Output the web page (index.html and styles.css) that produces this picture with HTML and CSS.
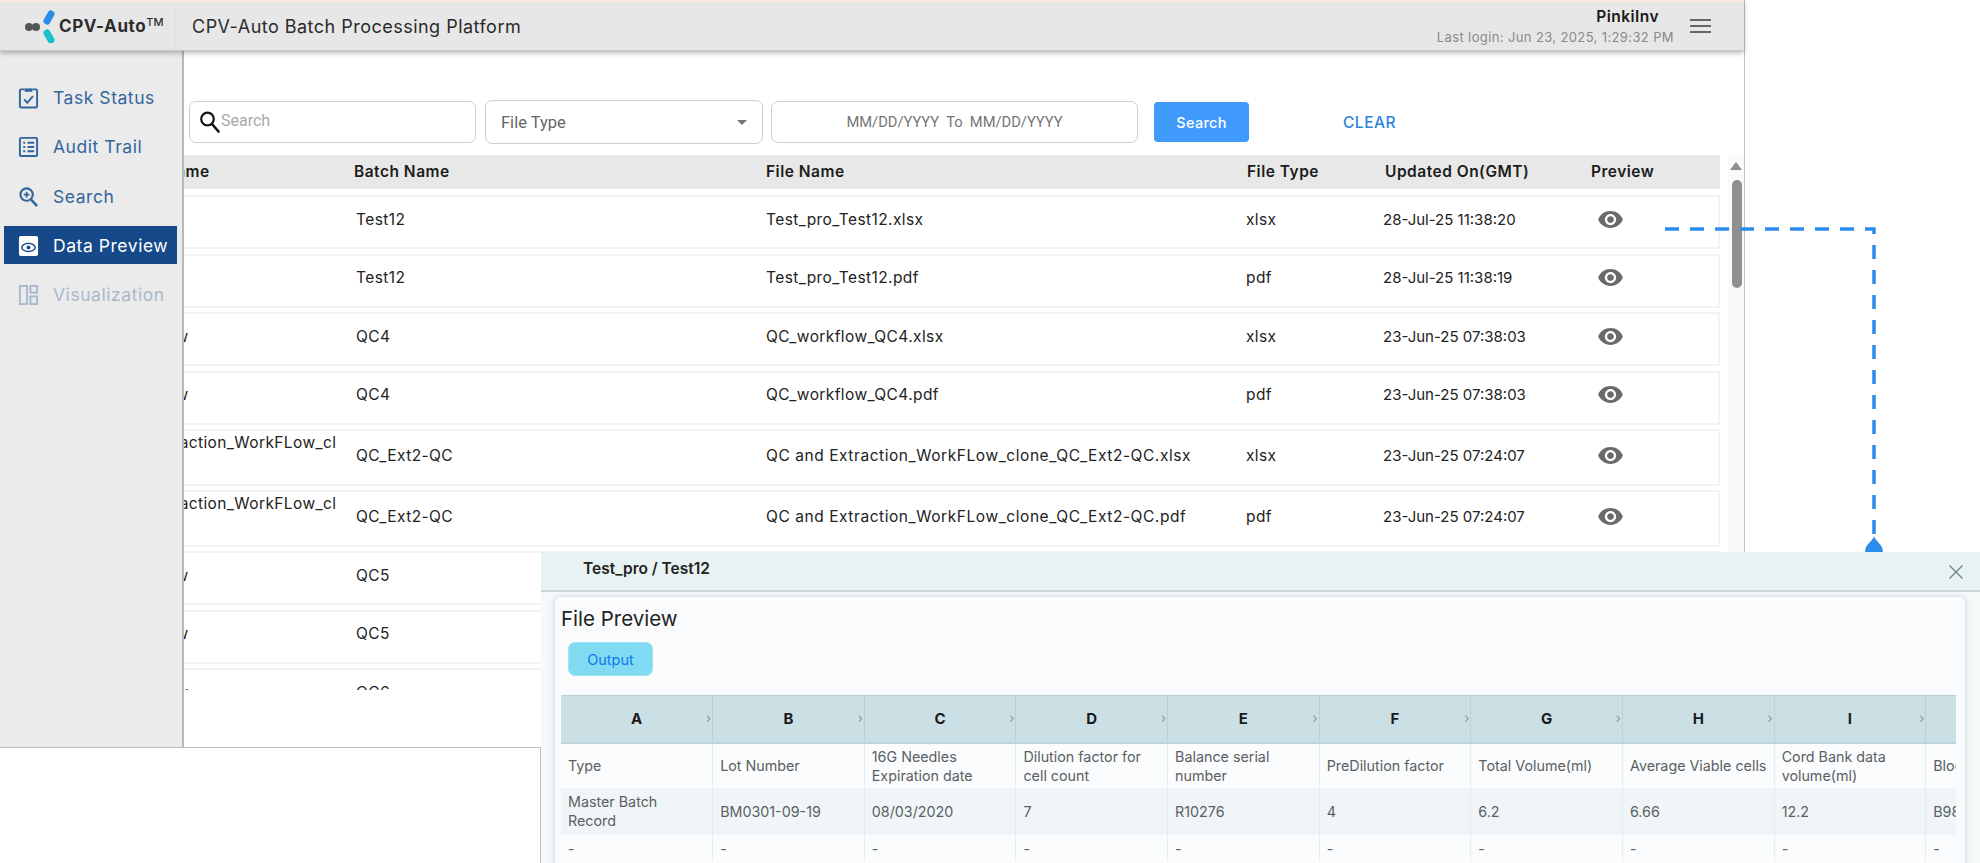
FILE: index.html
```html
<!DOCTYPE html>
<html lang="en">
<head>
<meta charset="utf-8">
<title>CPV-Auto Batch Processing Platform</title>
<link rel="stylesheet" href="styles.css">
</head>
<body>
<div class="shell">
  <header class="topbar">
    <div class="brand">
      <svg class="logo" width="32" height="34" viewBox="0 0 32 34">
        <circle cx="4" cy="18" r="4" fill="#555"/><circle cx="11" cy="18" r="4" fill="#555"/>
        <path d="M26 5 L22 12" stroke="#2b8be8" stroke-width="7" stroke-linecap="round"/>
        <path d="M22 24 L26 31" stroke="#19c0c8" stroke-width="7" stroke-linecap="round"/>
      </svg>
      <span class="brand-name">CPV-Auto<sup class="tm">TM</sup></span>
    </div>
    <div class="app-title">CPV-Auto Batch Processing Platform</div>
    <div class="user">
      <div class="user-name">PinkiInv</div>
      <div class="user-login">Last login: Jun 23, 2025, 1:29:32 PM</div>
    </div>
    <button class="burger" aria-label="Menu"><span></span><span></span><span></span></button>
  </header>

  <main class="main">
    <div class="filters">
      <label class="field search-field">
        <svg width="22" height="24" viewBox="0 0 22 24"><circle cx="8.5" cy="9" r="6.300" fill="none" stroke="#111" stroke-width="2.200"/><path d="M13 14l6.500 7.500" stroke="#111" stroke-width="2.600" stroke-linecap="round"/></svg>
        <span class="placeholder">Search</span>
      </label>
      <div class="field type-field"><span>File Type</span><i class="caret"></i></div>
      <div class="field date-field">MM/DD/YYYY&nbsp; To&nbsp; MM/DD/YYYY</div>
      <button class="search-btn">Search</button>
      <a class="clear">CLEAR</a>
    </div>

    <div class="grid-wrap">
      <div class="table">
        <div class="thead">
          <div class="th-first">Project Name</div><div>Batch Name</div><div>File Name</div><div>File Type</div><div>Updated On(GMT)</div><div>Preview</div>
        </div>
        <div class="rows">
          <div class="row"><div>Test_pro</div><div>Test12</div><div>Test_pro_Test12.xlsx</div><div>xlsx</div><div class="date">28-Jul-25 11:38:20</div><div class="eye"><svg viewBox="0 0 24 24"><path d="M12 4.5C7 4.5 2.73 7.61 1 12c1.73 4.39 6 7.5 11 7.5s9.27-3.11 11-7.5c-1.73-4.39-6-7.5-11-7.5zM12 17c-2.76 0-5-2.24-5-5s2.24-5 5-5 5 2.24 5 5-2.24 5-5 5zm0-8c-1.66 0-3 1.34-3 3s1.34 3 3 3 3-1.34 3-3-1.34-3-3-3z"/></svg></div></div>
          <div class="row"><div>Test_pro</div><div>Test12</div><div>Test_pro_Test12.pdf</div><div>pdf</div><div class="date">28-Jul-25 11:38:19</div><div class="eye"><svg viewBox="0 0 24 24"><path d="M12 4.5C7 4.5 2.73 7.61 1 12c1.73 4.39 6 7.5 11 7.5s9.27-3.11 11-7.5c-1.73-4.39-6-7.5-11-7.5zM12 17c-2.76 0-5-2.24-5-5s2.24-5 5-5 5 2.24 5 5-2.24 5-5 5zm0-8c-1.66 0-3 1.34-3 3s1.34 3 3 3 3-1.34 3-3-1.34-3-3-3z"/></svg></div></div>
          <div class="row"><div>QC_workflow</div><div>QC4</div><div>QC_workflow_QC4.xlsx</div><div>xlsx</div><div class="date">23-Jun-25 07:38:03</div><div class="eye"><svg viewBox="0 0 24 24"><path d="M12 4.5C7 4.5 2.73 7.61 1 12c1.73 4.39 6 7.5 11 7.5s9.27-3.11 11-7.5c-1.73-4.39-6-7.5-11-7.5zM12 17c-2.76 0-5-2.24-5-5s2.24-5 5-5 5 2.24 5 5-2.24 5-5 5zm0-8c-1.66 0-3 1.34-3 3s1.34 3 3 3 3-1.34 3-3-1.34-3-3-3z"/></svg></div></div>
          <div class="row"><div>QC_workflow</div><div>QC4</div><div>QC_workflow_QC4.pdf</div><div>pdf</div><div class="date">23-Jun-25 07:38:03</div><div class="eye"><svg viewBox="0 0 24 24"><path d="M12 4.5C7 4.5 2.73 7.61 1 12c1.73 4.39 6 7.5 11 7.5s9.27-3.11 11-7.5c-1.73-4.39-6-7.5-11-7.5zM12 17c-2.76 0-5-2.24-5-5s2.24-5 5-5 5 2.24 5 5-2.24 5-5 5zm0-8c-1.66 0-3 1.34-3 3s1.34 3 3 3 3-1.34 3-3-1.34-3-3-3z"/></svg></div></div>
          <div class="row tall"><div class="wrap">QC and Extraction_WorkFLow_clone</div><div>QC_Ext2-QC</div><div class="fname">QC and Extraction_WorkFLow_clone_QC_Ext2-QC.xlsx</div><div>xlsx</div><div class="date">23-Jun-25 07:24:07</div><div class="eye"><svg viewBox="0 0 24 24"><path d="M12 4.5C7 4.5 2.73 7.61 1 12c1.73 4.39 6 7.5 11 7.5s9.27-3.11 11-7.5c-1.73-4.39-6-7.5-11-7.5zM12 17c-2.76 0-5-2.24-5-5s2.24-5 5-5 5 2.24 5 5-2.24 5-5 5zm0-8c-1.66 0-3 1.34-3 3s1.34 3 3 3 3-1.34 3-3-1.34-3-3-3z"/></svg></div></div>
          <div class="row tall"><div class="wrap">QC and Extraction_WorkFLow_clone</div><div>QC_Ext2-QC</div><div class="fname">QC and Extraction_WorkFLow_clone_QC_Ext2-QC.pdf</div><div>pdf</div><div class="date">23-Jun-25 07:24:07</div><div class="eye"><svg viewBox="0 0 24 24"><path d="M12 4.5C7 4.5 2.73 7.61 1 12c1.73 4.39 6 7.5 11 7.5s9.27-3.11 11-7.5c-1.73-4.39-6-7.5-11-7.5zM12 17c-2.76 0-5-2.24-5-5s2.24-5 5-5 5 2.24 5 5-2.24 5-5 5zm0-8c-1.66 0-3 1.34-3 3s1.34 3 3 3 3-1.34 3-3-1.34-3-3-3z"/></svg></div></div>
          <div class="row"><div>QC_workflow</div><div>QC5</div></div>
          <div class="row"><div>QC_workflow</div><div>QC5</div></div>
          <div class="row"><div>QC_workflow</div><div>QC6</div></div>
        </div>
      </div>
      <div class="scrollbar"><i class="scroll-up"></i><i class="scroll-thumb"></i></div>
    </div>
  </main>

  <nav class="sidebar">
    <a class="nav-item">
      <svg class="nav-icon" viewBox="0 0 22 24"><path d="M7 3.5H3.2a1.2 1.2 0 0 0-1.2 1.2v16.6a1.2 1.2 0 0 0 1.2 1.2h15.6a1.2 1.2 0 0 0 1.2-1.2V4.700a1.200 1.200 0 0 0-1.200-1.200H15" fill="none" stroke="currentColor" stroke-width="2"/><path d="M7 2.500h8v3.500H7z" fill="currentColor"/><path d="M6.500 14l3.200 3.500 6-7" fill="none" stroke="currentColor" stroke-width="2"/></svg>
      Task Status
    </a>
    <a class="nav-item">
      <svg class="nav-icon" viewBox="0 0 22 24"><rect x="2" y="3" width="18" height="19" rx="1.200" fill="none" stroke="currentColor" stroke-width="2"/><path d="M5.500 8h2M5.500 12.500h2M5.500 17h2M10 8h7M10 12.500h7M10 17h7" stroke="currentColor" stroke-width="2"/></svg>
      Audit Trail
    </a>
    <a class="nav-item">
      <svg class="nav-icon" viewBox="0 0 22 24"><circle cx="9" cy="10" r="6.500" fill="none" stroke="currentColor" stroke-width="2.200"/><path d="M14 15.500l6 6.500" stroke="currentColor" stroke-width="2.600"/><path d="M9 7v6M6 10h6" stroke="currentColor" stroke-width="1.800"/></svg>
      Search
    </a>
    <a class="nav-item active">
      <svg class="nav-icon" viewBox="0 0 22 24"><rect x="1" y="2" width="20" height="21" rx="2" fill="#fff"/><ellipse cx="11" cy="14" rx="7" ry="4.200" fill="none" stroke="#15498a" stroke-width="1.500"/><circle cx="11" cy="14" r="2" fill="#15498a"/></svg>
      Data Preview
    </a>
    <a class="nav-item disabled">
      <svg class="nav-icon" viewBox="0 0 22 24"><rect x="2" y="3" width="7.500" height="19" fill="none" stroke="currentColor" stroke-width="2"/><rect x="13" y="3" width="7" height="7" fill="none" stroke="currentColor" stroke-width="2"/><rect x="13" y="14" width="7" height="8" fill="none" stroke="currentColor" stroke-width="2"/></svg>
      Visualization
    </a>
  </nav>
</div>

<div class="corner-box"></div>

<svg class="connector" width="230" height="330" viewBox="0 0 230 330">
  <path d="M1 2H210V320" fill="none" stroke="#2c8cea" stroke-width="3.500" stroke-dasharray="14 11"/>
  <path d="M210 309c1 5 9 8 9 16H201c0-8 8-11 9-16z" fill="#2c8cea"/>
</svg>

<section class="modal">
  <div class="modal-head">
    <span class="crumb">Test_pro / Test12</span>
    <svg class="close" width="16" height="16" viewBox="0 0 16 16"><path d="M1.500 1.500l13 13M14.500 1.500l-13 13" stroke="#6f8590" stroke-width="1.400"/></svg>
  </div>
  <div class="panel">
    <h2 class="panel-title">File Preview</h2>
    <button class="tab">Output</button>
    <div class="sheet">
      <table class="sheet-table">
        <thead>
          <tr><th>A<i>›</i></th><th>B<i>›</i></th><th>C<i>›</i></th><th>D<i>›</i></th><th>E<i>›</i></th><th>F<i>›</i></th><th>G<i>›</i></th><th>H<i>›</i></th><th>I<i>›</i></th><th>J<i>›</i></th></tr>
        </thead>
        <tbody>
          <tr class="r1"><td>Type</td><td>Lot Number</td><td>16G Needles Expiration date</td><td>Dilution factor for cell count</td><td>Balance serial number</td><td>PreDilution factor</td><td>Total Volume(ml)</td><td>Average Viable cells</td><td>Cord Bank data volume(ml)</td><td>Blood Bag Lot</td></tr>
          <tr class="r2"><td class="narrow">Master Batch Record</td><td>BM0301-09-19</td><td>08/03/2020</td><td>7</td><td>R10276</td><td>4</td><td>6.2</td><td>6.66</td><td>12.2</td><td>B98</td></tr>
          <tr class="r3"><td>-</td><td>-</td><td>-</td><td>-</td><td>-</td><td>-</td><td>-</td><td>-</td><td>-</td><td>-</td></tr>
        </tbody>
      </table>
    </div>
  </div>
</section>
</body>
</html>
```
FILE: styles.css
```css
* { box-sizing: border-box; }
html, body { margin: 0; height: 863px; overflow: hidden; background: #fff; }
body { position: relative; font-family: "Inter", "Open Sans", sans-serif; color: #222; }

.shell { width: 1745px; height: 863px; border-right: 1px solid #c4c4c4; position: relative; display: flex; flex-direction: column; }

.topbar { height: 51px; flex: none; background: #e7e7e7; border-top: 2px solid #fde6e2; border-bottom: 1px solid #c8c8c8; box-shadow: 0 2px 5px rgba(0,0,0,.28); display: flex; align-items: center; position: relative; z-index: 3; padding-left: 25px; }
.brand { display: flex; align-items: center; width: 151px; height: 100%; border-right: 1px solid #e1e1e1; flex: none; }
.logo { flex: none; margin-right: 2px; }
.brand-name { font-size: 17px; font-weight: 700; color: #2d2d2d; white-space: nowrap; letter-spacing: .6px; }
.tm { font-size: 11px; font-weight: 500; vertical-align: 6px; line-height: 0; letter-spacing: 0; }
.app-title { margin-left: 16px; font-size: 18px; color: #2b2b2b; letter-spacing: .48px; }
.user { margin-left: auto; display: flex; flex-direction: column; align-items: flex-end; }
.user-name { font-size: 15.500px; font-weight: 600; color: #1a1a1a; margin-right: 15px; line-height: 20px; letter-spacing: .45px; }
.user-login { font-size: 13px; color: #8a8a8a; line-height: 18px; margin-top: 1px; letter-spacing: .38px; }
.burger { width: 21px; height: 14px; margin: 0 33px 0 16px; padding: 0; border: 0; background: none; display: flex; flex-direction: column; justify-content: space-between; }
.burger span { display: block; height: 2px; background: #666; }

.main { flex: 1; min-height: 0; background: #fff; }
.filters { display: flex; align-items: center; height: 44px; margin: 49px 0 0 189px; }
.field { display: flex; align-items: center; background: #fff; border: 1px solid #cfcfcf; border-radius: 7px; font-family: "Roboto", sans-serif; flex: none; }
.search-field { width: 287px; height: 42px; padding-left: 9px; }
.placeholder { font-size: 16px; color: #a9a9a9; margin-top: -4px; }
.type-field { width: 278px; height: 44px; margin-left: 9px; padding: 0 15px; font-size: 16.500px; color: #666; justify-content: space-between; }
.caret { width: 0; height: 0; border: 5px solid transparent; border-top-color: #757575; border-bottom: 0; }
.date-field { width: 367px; height: 42px; margin-left: 8px; justify-content: center; font-size: 14.700px; color: #757575; }
.search-btn { width: 95px; height: 40px; margin-left: 16px; border: 0; border-radius: 4px; background: #3f9afb; color: #fff; font: 500 14.500px "Inter", sans-serif; letter-spacing: .3px; flex: none; }
.clear { margin-left: 94px; font-size: 15.500px; font-weight: 500; color: #2d83dd; letter-spacing: .5px; }

.grid-wrap { display: flex; margin: 11px 0 0 85px; }
.table { width: 1635px; flex: none; }
.thead, .row { display: grid; padding-left: 2px; }
.thead { grid-template-columns: 267px 412px 481px 138px 206px 129px; }
.row { grid-template-columns: 269px 410px 480px 137px 205px 132px; }
.thead { height: 34px; background: #e8e8e8; align-items: center; padding-bottom: 2px; font-size: 15.500px; font-weight: 600; color: #1c1c1c; white-space: nowrap; letter-spacing: .5px; }
.th-first { margin-left: 16px; }
.rows { height: 495px; margin-top: 6px; overflow: hidden; }
.row { height: 54px; margin-bottom: 4.500px; padding-top: 12.500px; border: 2px solid #f3f3f3; border-left: 0; font-size: 15.500px; line-height: 19px; color: #222; letter-spacing: .4px; }
.row > div { white-space: nowrap; }
.row > .date { font-size: 15px; letter-spacing: 0; }
.row > .fname { letter-spacing: .56px; }
.row.tall { height: 56.500px; padding-top: 14.500px; }
.row > .wrap { white-space: normal; word-break: break-all; margin-top: -13px; padding-right: 15px; }
.eye { padding-left: 9px; margin-top: -4px; }
.eye svg { width: 27px; height: 27px; fill: #6a6a6a; display: block; }

.scrollbar { width: 17px; margin-left: 8px; height: 700px; background: #fafafa; position: relative; }
.scroll-up { display: block; width: 0; height: 0; margin: 7px auto 0; border: 6px solid transparent; border-bottom: 8px solid #8c8c8c; border-top: 0; }
.scroll-thumb { display: block; width: 10px; height: 108px; margin: 10px 0 0 4px; border-radius: 5px; background: #8f8f8f; }

.sidebar { position: absolute; left: 0; top: 51px; width: 184px; height: 696px; background: #ebebeb; border-right: 2px solid #b8b8b8; padding: 27.500px 5px 0 4px; z-index: 2; }
.nav-item { display: flex; align-items: center; height: 38px; margin-bottom: 11.250px; padding-left: 14px; font-size: 17.500px; color: #33659d; white-space: nowrap; letter-spacing: .55px; }
.nav-icon { width: 21px; height: 23px; margin-right: 14px; flex: none; }
.nav-item.active { background: #15498a; color: #fff; }
.nav-item.disabled { color: #a8b9cc; }

.corner-box { position: absolute; left: 0; top: 747px; width: 541px; height: 116px; background: #fff; border-top: 1px solid #bdbdbd; border-right: 1px solid #bdbdbd; z-index: 4; }
.connector { position: absolute; left: 1664px; top: 227px; z-index: 5; }

.modal { position: absolute; left: 541px; top: 552px; right: 0; bottom: 0; background: #f5f9fa; z-index: 6; }
.modal-head { height: 40px; background: #e9f2f3; border-bottom: 2px solid #c5d6dc; display: flex; align-items: center; justify-content: space-between; padding: 0 16px 6px 42px; }
.crumb { font-size: 15.500px; font-weight: 600; color: #222; }
.close { margin-top: 8px; }
.panel { margin: 5px 15px 0 14px; height: 300px; background: #f9fbfd; border-radius: 5px; box-shadow: 0 0 5px rgba(120,160,170,.45); padding: 10px 8px 0 6px; }
.panel-title { margin: 0; font-size: 20.500px; font-weight: 400; line-height: 24px; color: #222; }
.tab { display: block; width: 85px; height: 34px; margin: 11px 0 19px 7px; border: 1px solid #9de3f2; border-radius: 7px; background: #80dbf2; color: #0d79f0; font: 400 14.500px "Inter", sans-serif; }
.sheet { width: 1395px; overflow: hidden; }
.sheet-table { border-collapse: collapse; table-layout: fixed; width: 1517px; font-size: 14.300px; line-height: 19px; color: #5a5f63; }
.sheet-table th { height: 47px; background: #cbe0e5; border-right: 1px solid #b9d0d6; border-top: 1px solid #b6ced4; border-bottom: 2px solid #bcd3d9; font-size: 15px; font-weight: 700; color: #1a1a1a; position: relative; }
.sheet-table th i { position: absolute; right: 1px; top: 12px; font-style: normal; font-weight: 400; font-size: 14px; color: #8a9aa0; }
.sheet-table td { padding: 0 2px 0 7px; border-right: 1px solid #e4eef0; vertical-align: middle; overflow: hidden; }
.sheet-table td.narrow { padding-right: 24px; }
.r1 td { height: 45px; background: #fafcfd; }
.r2 td { height: 47px; background: #f0f6f8; }
.r3 td { height: 27px; background: #fafcfd; }
```
